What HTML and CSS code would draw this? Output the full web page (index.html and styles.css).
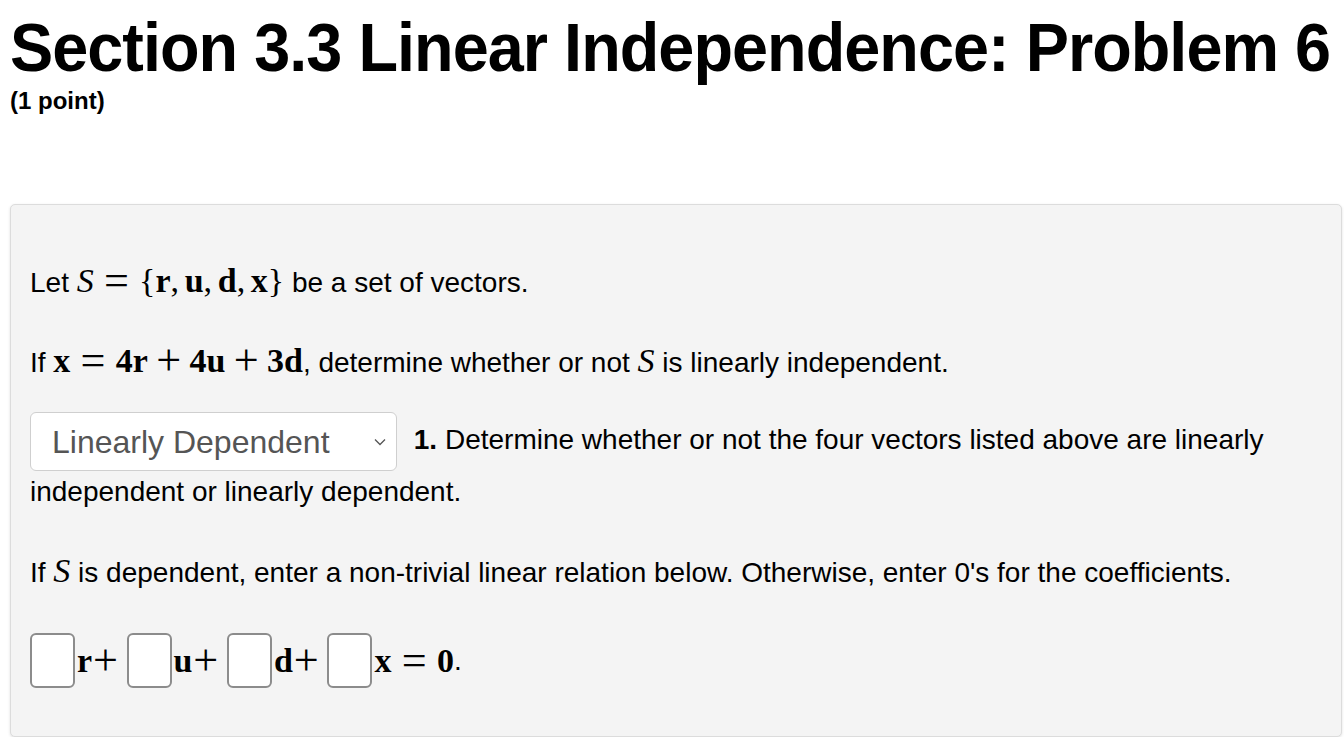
FILE: index.html
```html
<!DOCTYPE html>
<html>
<head>
<meta charset="utf-8">
<link rel="stylesheet" href="styles.css">
</head>
<body>
<h1 class="title">Section 3.3 Linear Independence: Problem 6</h1>
<div class="points">(1 point)</div>
<div class="problem">
  <p class="para">Let <span class="m"><i class="mi">S</i><span class="rel">=</span>{<b>r</b><span class="comma">,</span><b>u</b><span class="comma">,</span><b>d</b><span class="comma">,</span><b>x</b>}</span> be a set of vectors.</p>
  <p class="para">If <span class="m"><b>x</b><span class="rel">=</span><b>4r</b><span class="bin">+</span><b>4u</b><span class="bin">+</span><b>3d</b></span>, determine whether or not <span class="m"><i class="mi">S</i></span> is linearly independent.</p>
  <p class="para sel-para"><span class="select"><span class="select-text">Linearly Dependent</span><svg class="chev" width="12" height="8" viewBox="0 0 12 8"><path d="M1 1.5 L6 6.5 L11 1.5" fill="none" stroke="#555" stroke-width="1.3"/></svg></span> <b class="num">1.</b> Determine whether or not the four vectors listed above are linearly independent or linearly dependent.</p>
  <p class="para">If <span class="m"><i class="mi">S</i></span> is dependent, enter a non-trivial linear relation below. Otherwise, enter 0's for the coefficients.</p>
  <div class="para eq"><span class="box"></span><span class="m term"><b>r</b><span class="ord">+</span></span><span class="box"></span><span class="m term"><b>u</b><span class="ord">+</span></span><span class="box"></span><span class="m term"><b>d</b><span class="ord">+</span></span><span class="box"></span><span class="m last"><b>x</b><span class="rel">=</span><b>0</b></span><span class="dot">.</span></div>
</div>
</body>
</html>
```

FILE: styles.css
```css
html, body {
  margin: 0;
  padding: 0;
  background: #fff;
}
body {
  padding: 0 2px 0 10px;
  font-family: "Liberation Sans", Arial, sans-serif;
  color: #000;
}
.title {
  margin: 9px 0 0 0;
  font-size: 69px;
  line-height: 77px;
  font-weight: bold;
  letter-spacing: -1px;
  white-space: nowrap;
  transform: scaleX(0.938);
  transform-origin: left center;
}
.points {
  font-size: 24px;
  font-weight: bold;
  line-height: 30px;
}
.problem {
  margin-top: 88px;
  background: #f4f4f4;
  border: 1px solid #dcdcdc;
  border-radius: 5px;
  box-shadow: 0 1px 3px rgba(0,0,0,0.12);
  padding: 58px 20px 48px 19px;
  font-size: 28px;
}
.para {
  margin: 0;
  line-height: 40px;
}
.para + .para {
  margin-top: 40px;
}
.para.sel-para {
  margin-top: 29px;
  line-height: 42px;
}
.para.sel-para + .para {
  margin-top: 40px;
}
.para.eq {
  margin-top: 40px;
}
.m {
  font-family: "Liberation Serif", "Times New Roman", serif;
  font-size: 34px;
  line-height: 1;
  white-space: nowrap;
}
.m b {
  font-weight: bold;
}
.mi {
  font-style: italic;
}
.rel, .bin, .ord {
  display: inline-block;
  font-size: 1.3em;
  line-height: 0.6;
  width: 0.6em;
  text-align: center;
  vertical-align: -3px;
}
.rel {
  margin: 0 0.2137em;
}
.bin {
  margin: 0 0.171em;
}
.comma {
  margin-right: 0.1667em;
}
.select {
  display: inline-flex;
  align-items: center;
  justify-content: space-between;
  box-sizing: border-box;
  width: 367px;
  height: 59px;
  padding: 0 10px 0 21px;
  background: #fff;
  border: 1px solid #cfcfcf;
  border-radius: 6px;
  vertical-align: middle;
  color: #555;
  font-size: 32px;
  margin-right: 9px;
}
.chev {
  display: block;
}
.num {
  font-weight: bold;
}
.eq {
  display: flex;
  align-items: center;
  line-height: 55px;
}
.box {
  display: inline-block;
  box-sizing: border-box;
  width: 45px;
  height: 55px;
  background: #fff;
  border: 2px solid #8c8c8c;
  border-radius: 6px;
}
.eq .term {
  margin: 0 8px 0 2px;
}
.eq .last {
  margin: 0 0 0 2px;
}
```
